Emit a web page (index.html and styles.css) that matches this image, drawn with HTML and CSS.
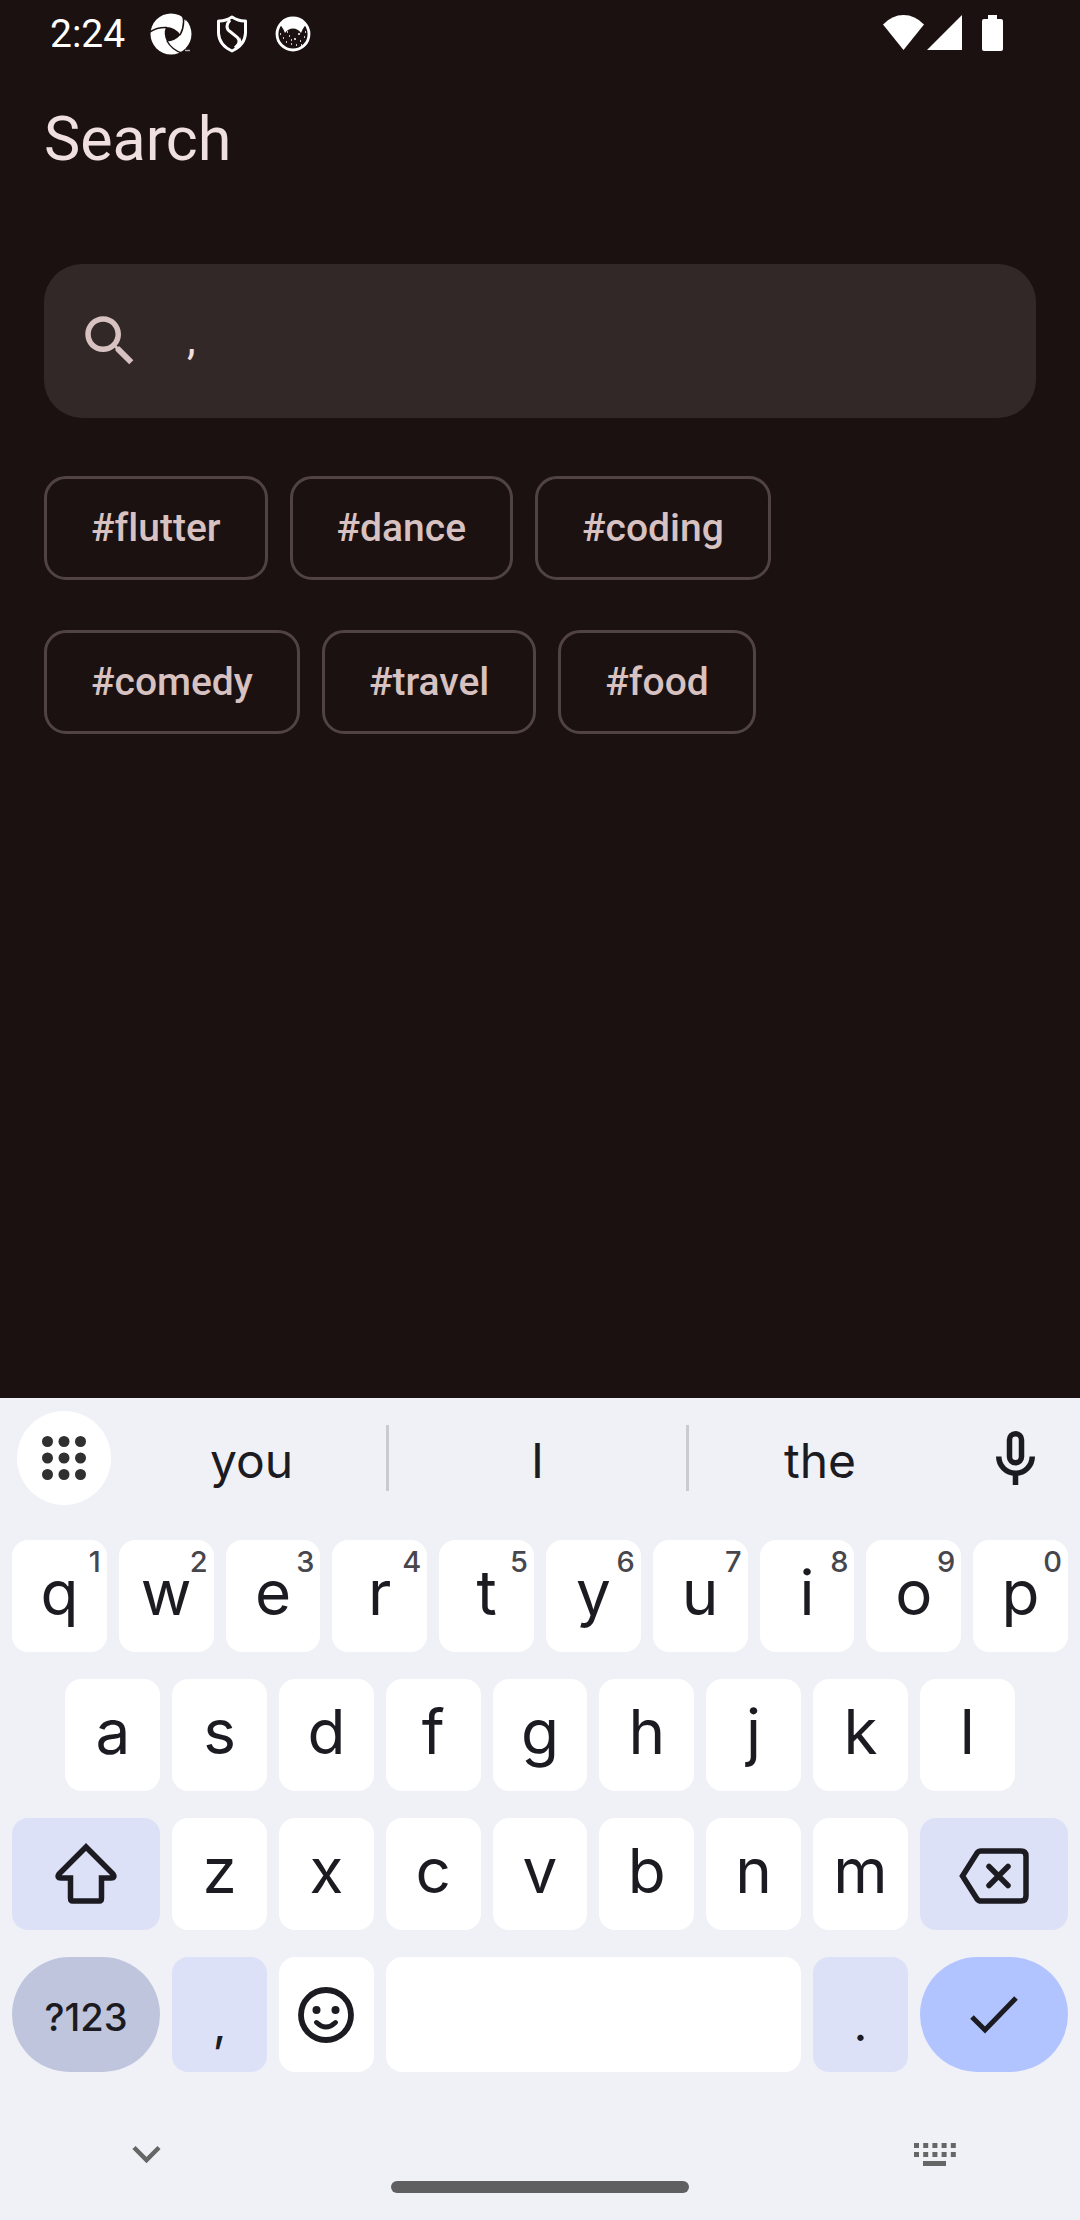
FILE: index.html
```html
<!DOCTYPE html>
<html lang="en">
<head>
<meta charset="utf-8">
<meta name="viewport" content="width=device-width, initial-scale=1">
<title>Search</title>
<link rel="stylesheet" href="styles.css">
</head>
<body>
<div class="status">
  <div class="status-left">
    <span class="clock">2:24</span>
    <svg class="notice" viewBox="0 0 42 42" aria-hidden="true">
      <circle cx="21" cy="21" r="20.500" fill="#fff"/>
      <path d="M16 14Q25 14 30.500 22Q25 28 17 28.500Q13 21 16 14Z" fill="#1a1110"/>
      <path d="M33 3Q35 13 30 22M0 19Q7 14 17 14.500M17 28Q22 37 32 40" fill="none" stroke="#1a1110" stroke-width="1.500"/>
      <path d="M31 2L35 4L36 8L33.500 6Z" fill="#1a1110"/>
      <path d="M35 37.500h5" stroke="#aaa" stroke-width="1.500"/>
    </svg>
    <svg class="notice" viewBox="0 0 42 42" aria-hidden="true">
      <path d="M21 4Q28 8.500 34.500 8V20Q34 32 21 38Q8 32 7.500 20V8Q14 8.500 21 4Z" fill="none" stroke="#fff" stroke-width="3" stroke-linejoin="round"/>
      <path d="M19 7Q13 14 19 18.500L26 24Q31 29 24 35" fill="none" stroke="#fff" stroke-width="3"/>
      <path d="M26 36L31 30L29 24Z" fill="#fff"/>
    </svg>
    <svg class="notice" viewBox="0 0 42 42" aria-hidden="true">
      <circle cx="21" cy="21" r="16" fill="none" stroke="#fff" stroke-width="2.800"/>
      <path d="M8.500 12Q13 5 21 5T33.500 12Q31 15 29 20Q26 15.500 21 15.500T13 20Q11 15 8.500 12Z" fill="#fff"/>
      <path d="M8 21h1M11 25h1M14 29h1M19 31h1M24 32h1M28 28h1M32 24h1M22 26h2M17 23h1M26 21h2M33 19h1M15 19h1M19 27h1M29 32h1" stroke="#fff" stroke-width="1.500"/>
    </svg>
  </div>
  <div class="status-right">
    <svg width="41" height="35" viewBox="0 0 41 35" aria-hidden="true"><path d="M0 9.500Q9 0 20.500 0T41 9.500L20.500 35Z" fill="#fff"/></svg>
    <svg width="35" height="35" viewBox="0 0 35 35" aria-hidden="true"><path d="M35 0V35H0Z" fill="#fff"/></svg>
    <svg class="battery" width="21" height="36" viewBox="0 0 21 36" aria-hidden="true"><path d="M6 0H15V4H19Q21 4 21 6V34Q21 36 19 36H2Q0 36 0 34V6Q0 4 2 4H6Z" fill="#fff"/></svg>
  </div>
</div>

<main class="app">
  <h1 class="title">Search</h1>
  <label class="field">
    <svg width="66" height="66" viewBox="0 0 24 24" role="img" aria-label="Search"><path fill="#d7c1c1" d="M15.500 14h-.79l-.28-.27C15.410 12.590 16 11.110 16 9.500 16 5.910 13.090 3 9.500 3S3 5.910 3 9.500 5.910 16 9.500 16c1.610 0 3.090-.59 4.230-1.570l.27.28v.79l5 4.990L20.490 19l-4.990-5zm-6 0C7.010 14 5 11.990 5 9.500S7.010 5 9.500 5 14 7.010 14 9.500 11.990 14 9.500 14z"/></svg>
    <input class="field-input" type="text" value=",">
  </label>
  <div class="chips">
    <button class="chip">#flutter</button>
    <button class="chip">#dance</button>
    <button class="chip">#coding</button>
    <button class="chip">#comedy</button>
    <button class="chip">#travel</button>
    <button class="chip">#food</button>
  </div>
</main>

<section class="keyboard" aria-label="Keyboard">
  <div class="suggestions">
    <button class="apps" aria-label="Keyboard tools">
      <svg width="44" height="44" viewBox="0 0 44 44" fill="#303030"><circle cx="5.500" cy="5.500" r="5.500"/><circle cx="22" cy="5.500" r="5.500"/><circle cx="38.500" cy="5.500" r="5.500"/><circle cx="5.500" cy="22" r="5.500"/><circle cx="22" cy="22" r="5.500"/><circle cx="38.500" cy="22" r="5.500"/><circle cx="5.500" cy="38.500" r="5.500"/><circle cx="22" cy="38.500" r="5.500"/><circle cx="38.500" cy="38.500" r="5.500"/></svg>
    </button>
    <button class="word">you</button>
    <button class="word word-middle">I</button>
    <button class="word">the</button>
    <button class="mic" aria-label="Voice input">
      <svg width="39" height="54" viewBox="0 0 39 54" fill="none" stroke="#1b1b21" stroke-width="5.500"><rect x="13.500" y="2.750" width="12" height="29" rx="6"/><path d="M2.750 25.500a16.750 16.750 0 0 0 33.500 0M19.500 42V54"/></svg>
    </button>
  </div>

  <div class="keys">
    <button class="key">q<span class="hint">1</span></button>
    <button class="key">w<span class="hint">2</span></button>
    <button class="key">e<span class="hint">3</span></button>
    <button class="key">r<span class="hint">4</span></button>
    <button class="key">t<span class="hint">5</span></button>
    <button class="key">y<span class="hint">6</span></button>
    <button class="key">u<span class="hint">7</span></button>
    <button class="key">i<span class="hint">8</span></button>
    <button class="key">o<span class="hint">9</span></button>
    <button class="key">p<span class="hint">0</span></button>

    <button class="key key-indent">a</button>
    <button class="key">s</button>
    <button class="key">d</button>
    <button class="key">f</button>
    <button class="key">g</button>
    <button class="key">h</button>
    <button class="key">j</button>
    <button class="key">k</button>
    <button class="key">l</button>

    <button class="key key-wide key-tint key-first" aria-label="Shift">
      <svg width="62" height="62" viewBox="0 0 62 62" fill="none" stroke="#1b1b21" stroke-width="5.500"><path d="M31 4L4 31Q1.500 35 6 35H15.500V55Q15.500 58 17.500 58H44.500Q46.500 58 46.500 55V35H56Q60.500 35 58 31Z"/></svg>
    </button>
    <button class="key">z</button>
    <button class="key">x</button>
    <button class="key">c</button>
    <button class="key">v</button>
    <button class="key">b</button>
    <button class="key">n</button>
    <button class="key">m</button>
    <button class="key key-wide key-tint" aria-label="Backspace">
      <svg width="70" height="60" viewBox="0 -4 70 60" fill="none" stroke="#1b1b21" stroke-width="5.500"><path d="M3.500 28L18 5Q19.500 3 22 3H62Q67 3 67 8V48Q67 53 62 53H22Q19.500 53 18 51Z"/><path d="M30 18.500L49 37.500M49 18.500L30 37.500" stroke-linecap="round"/></svg>
    </button>

    <button class="key key-wide key-round key-symbols">?123</button>
    <button class="key key-tint key-mark">,</button>
    <button class="key" aria-label="Emoji">
      <svg width="56" height="56" viewBox="0 0 56 56"><circle cx="28" cy="28" r="25" fill="none" stroke="#1b1b21" stroke-width="5.800"/><circle cx="18.500" cy="23" r="4" fill="#1b1b21"/><circle cx="37.500" cy="23" r="4" fill="#1b1b21"/><path d="M18.500 35.500Q28 44.500 37.500 35.500" fill="none" stroke="#1b1b21" stroke-width="4.800" stroke-linecap="round"/></svg>
    </button>
    <button class="key key-space" aria-label="Space"></button>
    <button class="key key-tint key-mark">.</button>
    <button class="key key-wide key-round key-done" aria-label="Done">
      <svg width="48" height="38" viewBox="0 0 48 38" fill="none" stroke="#1b1b21" stroke-width="5"><path d="M2 21L15 34L46 2"/></svg>
    </button>
  </div>

  <div class="nav">
    <button class="nav-button" aria-label="Hide keyboard">
      <svg width="60" height="60" viewBox="0 0 60 60" fill="none" stroke="#666" stroke-width="4.500"><path d="M19 23.500L31.500 36L44 23.500"/></svg>
    </button>
    <div class="home"></div>
    <button class="nav-button nav-right" aria-label="Switch keyboard">
      <svg width="60" height="60" viewBox="0 0 60 60" stroke="#666" stroke-width="5"><path d="M9 21.500H51M9 30.500H51" stroke-dasharray="5 4.200"/><path d="M18 39.500H41"/></svg>
    </button>
  </div>
</section>
</body>
</html>
```
FILE: styles.css
```css
* {
  box-sizing: border-box;
}

body {
  margin: 0;
  min-height: 100vh;
  display: flex;
  flex-direction: column;
  background: #1a1110;
  color: #f0dfdf;
  font-family: Roboto, "Liberation Sans", sans-serif;
}

button {
  margin: 0;
  padding: 0;
  border: 0;
  background: none;
  color: inherit;
  font: inherit;
}

svg {
  display: block;
  flex: none;
}

.status {
  display: flex;
  justify-content: space-between;
  padding: 0 77px 0 50px;
  height: 68px;
  color: #fff;
}

.status-left {
  display: flex;
  align-items: center;
  gap: 19px;
}

.clock {
  margin-right: 6px;
  font-size: 39px;
}

.notice {
  width: 42px;
  height: 42px;
}

.status-right {
  display: flex;
  align-items: flex-start;
  gap: 3px;
  padding-top: 15px;
}

.battery {
  margin-left: 17px;
}

.app {
  flex: 1;
  padding: 0 44px;
}

.title {
  margin: 0 0 52px;
  padding: 34px 0 35px;
  font-size: 61px;
  line-height: 75px;
  font-weight: 400;
}

.field {
  display: flex;
  align-items: center;
  gap: 44px;
  height: 154px;
  padding: 0 33px;
  border-radius: 38px;
  background: #322828;
}

.field-input {
  flex: 1;
  min-width: 0;
  padding: 0 0 4px;
  border: 0;
  outline: 0;
  background: none;
  color: inherit;
  font-family: inherit;
  font-size: 44px;
}

.chips {
  display: flex;
  flex-wrap: wrap;
  gap: 50px 22px;
  margin-top: 58px;
}

.chip {
  height: 104px;
  padding: 0 44px;
  border: 3px solid #524343;
  border-radius: 22px;
  color: #d7c1c1;
  font-size: 39px;
  font-weight: 500;
  font-variant-ligatures: none;
}

.keyboard {
  background: #f0f0f7;
  color: #1b1b21;
  font-family: Inter, Roboto, sans-serif;
}

.suggestions {
  display: grid;
  grid-template-columns: 117px 269fr 303fr 262fr 129px;
  align-items: center;
  height: 120px;
}

.apps {
  display: grid;
  place-items: center;
  width: 94px;
  height: 94px;
  margin-left: 17px;
  border-radius: 50%;
  background: #fff;
}

.word {
  height: 66px;
  padding-top: 6px;
  font-size: 48px;
  line-height: 60px;
}

.word-middle {
  border: solid #cacad1;
  border-width: 0 3px;
}

.mic {
  justify-self: center;
}

.keys {
  display: grid;
  grid-template-columns: repeat(20, 1fr);
  grid-template-rows: repeat(3, 112px) 115px;
  gap: 27px 12px;
  padding: 22px 12px 0;
}

.key {
  position: relative;
  grid-column: span 2;
  display: flex;
  align-items: center;
  justify-content: center;
  padding-bottom: 6px;
  border-radius: 16px;
  background: #fff;
  font-size: 62px;
  line-height: 72px;
}

.key:has(svg) {
  padding: 0;
}

.hint {
  position: absolute;
  top: 7px;
  right: 6px;
  color: #46464c;
  font-size: 29px;
  line-height: 29px;
  font-weight: 500;
}

.key-indent {
  grid-column: 2 / span 2;
}

.key-wide {
  grid-column: span 3;
}

.key-first {
  grid-column: 1 / span 3;
}

.key-space {
  grid-column: span 8;
}

.key-tint {
  background: #dde1f8;
}

.key-round {
  border-radius: 58px;
}

.key-symbols {
  padding: 4px 0 0;
  background: #c0c5de;
  font-size: 38px;
  font-weight: 500;
}

.key-mark {
  padding: 18px 0 0;
  font-size: 48px;
}

.key-done {
  background: #b1c4ff;
}

.nav {
  display: grid;
  grid-template-columns: 1fr 298px 1fr;
  padding: 52px 115px 27px;
}

.nav-button {
  justify-self: start;
  align-self: start;
}

.nav-right {
  justify-self: end;
}

.home {
  align-self: end;
  height: 12px;
  margin-top: 57px;
  border-radius: 6px;
  background: #5f5f62;
}
```
